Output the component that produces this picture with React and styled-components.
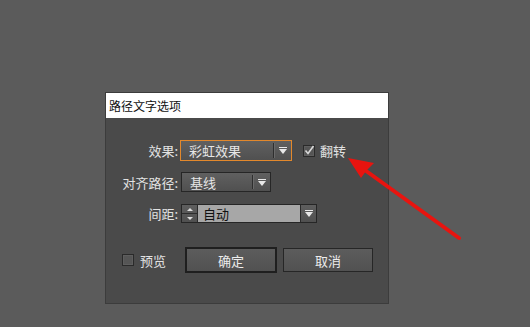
import React from "react";
import styled, { createGlobalStyle } from "styled-components";

const Global = createGlobalStyle`
  html, body { margin: 0; padding: 0; }
  body {
    background: #5b5b5b;
    width: 530px;
    height: 327px;
    overflow: hidden;
    font-family: "Noto Sans CJK SC", "Noto Sans", sans-serif;
  }
`;

const Page = styled.div`
  position: relative;
  width: 530px;
  height: 327px;
  padding: 92px 0 0 105px;
  box-sizing: border-box;
`;

const Dialog = styled.div`
  width: 284px;
  height: 212px;
  box-sizing: border-box;
  background: #4a4a4a;
  border: 1px solid #3c3c3c;
  display: flex;
  flex-direction: column;
`;

const TitleBar = styled.div`
  height: 25px;
  background: #ffffff;
  color: #111;
  font-size: 12px;
  line-height: 25px;
  padding-left: 3px;
`;

const Body = styled.div`
  display: grid;
  grid-template-columns: 74px auto;
  grid-auto-rows: auto;
  align-items: center;
  padding-top: 22px;
`;

const Label = styled.div`
  color: #e2e2e2;
  font-size: 13px;
  text-align: right;
  padding-right: 2px;
  white-space: nowrap;
  margin-top: ${(p) => p.$mt || 0}px;
`;

const RowControls = styled.div`
  display: flex;
  align-items: center;
  height: ${(p) => p.$h}px;
  margin-top: ${(p) => p.$mt || 0}px;
`;

const Select = styled.div`
  width: ${(p) => p.$w}px;
  height: ${(p) => p.$h}px;
  box-sizing: border-box;
  border: 1px solid ${(p) => (p.$focus ? "#e2882c" : "#262626")};
  background: linear-gradient(#606060, #505050);
  display: flex;
  align-items: center;
  color: #e6e6e6;
  font-size: 13px;
  margin-left: ${(p) => p.$ml || 0}px;
`;

const SelectText = styled.div`
  flex: 1;
  padding-left: ${(p) => p.$pl || 8}px;
  white-space: nowrap;
`;

const Sep = styled.div`
  width: 1px;
  align-self: stretch;
  margin: 2px 0;
  background: #2e2e2e;
  box-shadow: 1px 0 0 #6a6a6a;
`;

const ArrowBox = styled.div`
  width: 17px;
  display: flex;
  align-items: center;
  justify-content: center;
`;

const Tri = styled.div`
  width: 0;
  height: 0;
  border-left: 4px solid transparent;
  border-right: 4px solid transparent;
  border-top: 5px solid #e8e8e8;
  position: relative;
  top: 1px;
  &::before {
    content: "";
    position: absolute;
    left: -4px;
    top: -7px;
    width: 8px;
    height: 1px;
    background: #e8e8e8;
  }
`;

const CheckWrap = styled.div`
  display: flex;
  align-items: center;
  margin-left: ${(p) => p.$ml || 0}px;
  color: #e2e2e2;
  font-size: 13px;
  gap: ${(p) => p.$gap || 6}px;
`;

const Box = styled.div`
  width: 12px;
  height: 12px;
  box-sizing: border-box;
  border: 1px solid #2a2a2a;
  background: #555;
  box-shadow: inset 0 0 0 1px #5e5e5e;
  position: relative;
`;

const CheckMark = styled.svg`
  position: absolute;
  left: -1px;
  top: -2px;
`;

const Combo = styled.div`
  width: 136px;
  height: 19px;
  box-sizing: border-box;
  border: 1px solid #262626;
  display: flex;
  margin-left: 1px;
`;

const Spinner = styled.div`
  width: 15px;
  display: flex;
  flex-direction: column;
  background: linear-gradient(#5e5e5e, #505050);
  border-right: 1px solid #2a2a2a;
`;

const SpinHalf = styled.div`
  flex: 1;
  display: flex;
  align-items: center;
  justify-content: center;
  border-top: ${(p) => (p.$bottom ? "1px solid #2c2c2c" : "none")};
`;

const SmallTri = styled.div`
  width: 0;
  height: 0;
  border-left: 3px solid transparent;
  border-right: 3px solid transparent;
  ${(p) => (p.$up ? "border-bottom: 3px solid #ddd;" : "border-top: 3px solid #ddd;")}
`;

const Field = styled.div`
  flex: 1;
  background: #a7a7a7;
  color: #111;
  font-size: 13px;
  line-height: 17px;
  padding-left: 5px;
`;

const ComboBtn = styled.div`
  width: 15px;
  border-left: 1px solid #2a2a2a;
  background: linear-gradient(#5e5e5e, #505050);
  display: flex;
  align-items: center;
  justify-content: center;
`;

const Footer = styled.div`
  display: flex;
  align-items: center;
  padding: 24px 0 0 16px;
`;

const Button = styled.div`
  width: ${(p) => p.$w}px;
  height: ${(p) => p.$h}px;
  box-sizing: border-box;
  border: ${(p) => (p.$primary ? "2px solid #1f1f1f" : "1px solid #262626")};
  background: linear-gradient(#5c5c5c, #515151);
  color: #ececec;
  font-size: 13px;
  display: flex;
  align-items: center;
  justify-content: center;
  margin-left: ${(p) => p.$ml || 0}px;
`;

const Overlay = styled.svg`
  position: absolute;
  left: 0;
  top: 0;
  pointer-events: none;
`;

export default function App() {
  return (
    <Page>
      <Global />
      <Dialog>
        <TitleBar>路径文字选项</TitleBar>
        <Body>
          <Label>效果:</Label>
          <RowControls $h={21}>
            <Select $w={112} $h={21} $focus>
              <SelectText $pl={8}>彩虹效果</SelectText>
              <Sep />
              <ArrowBox>
                <Tri />
              </ArrowBox>
            </Select>
            <CheckWrap $ml={11} $gap={5}>
              <Box>
                <CheckMark width="12" height="12" viewBox="0 0 12 12">
                  <path d="M2.5 6.5 L5 9.5 L10.5 2" fill="none" stroke="#d8d8d8" strokeWidth="1.6" />
                </CheckMark>
              </Box>
              <span>翻转</span>
            </CheckWrap>
          </RowControls>

          <Label $mt={11}>对齐路径:</Label>
          <RowControls $h={20} $mt={11}>
            <Select $w={90} $h={20} $ml={1}>
              <SelectText $pl={8}>基线</SelectText>
              <Sep />
              <ArrowBox>
                <Tri />
              </ArrowBox>
            </Select>
          </RowControls>

          <Label $mt={12}>间距:</Label>
          <RowControls $h={19} $mt={12}>
            <Combo>
              <Spinner>
                <SpinHalf>
                  <SmallTri $up />
                </SpinHalf>
                <SpinHalf $bottom>
                  <SmallTri />
                </SpinHalf>
              </Spinner>
              <Field>自动</Field>
              <ComboBtn>
                <Tri />
              </ComboBtn>
            </Combo>
          </RowControls>
        </Body>
        <Footer>
          <CheckWrap $gap={6}>
            <Box />
            <span>预览</span>
          </CheckWrap>
          <Button $primary $w={92} $h={26} $ml={19}>确定</Button>
          <Button $w={90} $h={24} $ml={6}>取消</Button>
        </Footer>
      </Dialog>
      <Overlay width="530" height="327" viewBox="0 0 530 327">
        <line x1="459" y1="238" x2="362" y2="168" stroke="#e8140f" strokeWidth="4" strokeLinecap="round" />
        <polygon points="348,158 374,163 366,171 361,178" fill="#e8140f" />
      </Overlay>
    </Page>
  );
}
